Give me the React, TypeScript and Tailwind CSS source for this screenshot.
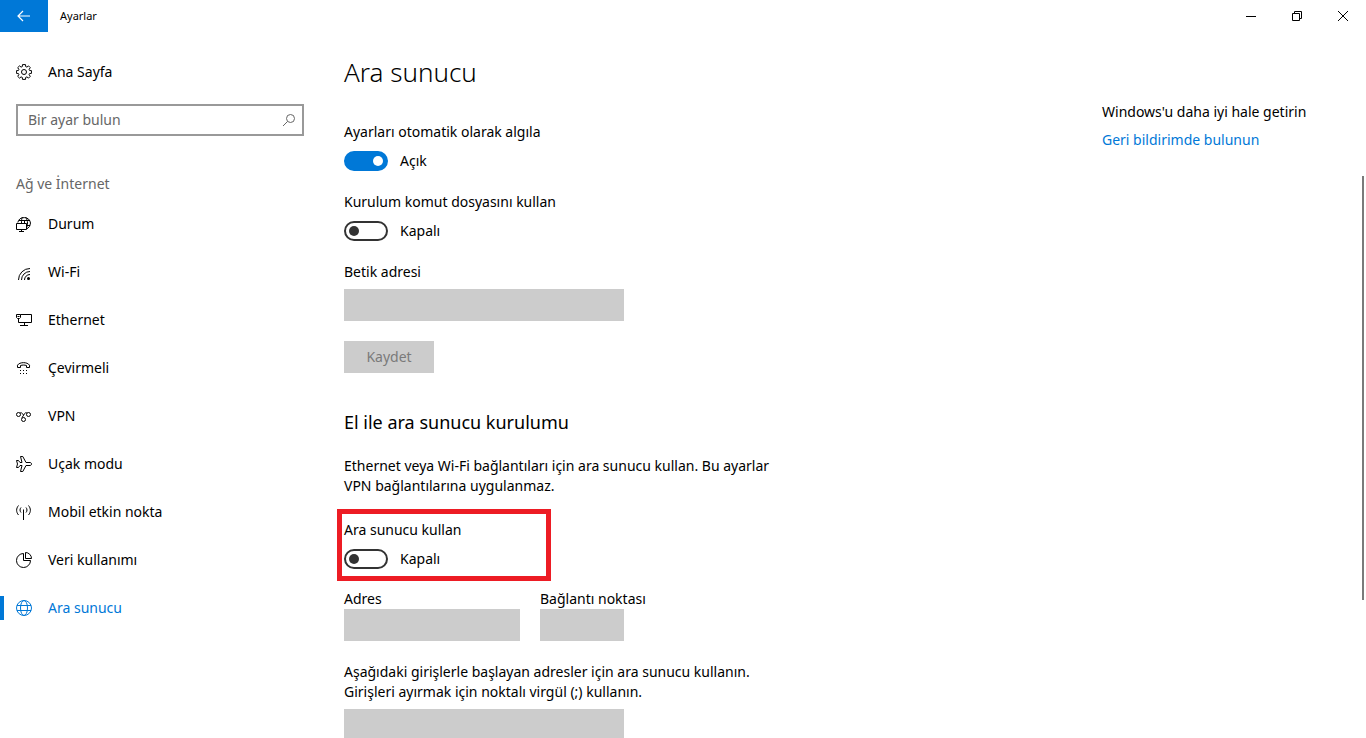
import { useState } from "react";
import type { ReactNode } from "react";

const Icon = ({ children }: { children: ReactNode }) => (
    <svg
        viewBox="0 0 16 16"
        className="h-4 w-4 shrink-0"
        fill="none"
        stroke="currentColor"
        strokeWidth="1"
        aria-hidden="true"
    >
        {children}
    </svg>
);

const GearIcon = () => (
    <Icon>
        <path d="M6.500 .6h3l.2 2 1.200.5 1.600-1.200 1.800 1.800-1.200 1.600.5 1.200 2 .2v2.600l-2 .2-.5 1.200 1.200 1.600-1.800 1.800-1.600-1.200-1.200.5-.2 2h-3l-.2-2-1.200-.5-1.600 1.200-1.800-1.800 1.200-1.600-.5-1.200-2-.2V6.700l2-.2.5-1.200-1.200-1.600 1.800-1.800 1.600 1.200 1.200-.5z" />
        <circle cx="8" cy="8" r="2.500" />
    </Icon>
);

const StatusIcon = () => (
    <Icon>
        <path d="M1.800 6.500A6.500 6.500 0 0 1 14.500 7a6.500 6.500 0 0 1-3.500 5.800M6.500 1C5.500 2.500 5.500 4.500 5.500 7M9.500 1c1.500 2 2 4 2 6 0 2-.3 3-.8 4.500M8.500 4.500V7M3 4.500h11M11 9.500h3" />
        <path d="M.5 7.500h10v6H.5zM5.500 13.500v2M3 15.500h5" />
    </Icon>
);

const WifiIcon = () => (
    <Icon>
        <path d="M2.500 16A11.500 11.500 0 0 1 14 4.500M5.500 16A8.500 8.500 0 0 1 14 7.500M8.500 16A5.500 5.500 0 0 1 14 10.500" />
        <circle cx="12.500" cy="14.500" r="1.500" fill="currentColor" stroke="none" />
    </Icon>
);

const EthernetIcon = () => (
    <Icon>
        <path d="M4.500 2.500h11v8H2.500V7M8.500 10.500v3M4 13.500h8" />
        <path d="M.5 2.500h4v3l-1 1h-2l-1-1zM1.500 4.500h2" />
    </Icon>
);

const DialUpIcon = () => (
    <Icon>
        <path d="M1.500 7.500V5.200C3.500 1.800 11.500 1.800 13.500 5.200v2.300h-3V5.500c-2-.6-4-.6-6 0v2z" />
        <path d="M4 10.500h1M7 10.500h1M10 10.500h1M4 13.500h1M7 13.500h1M10 13.500h1" />
    </Icon>
);

const VpnIcon = () => (
    <Icon>
        <circle cx="2.500" cy="6.500" r="2" />
        <circle cx="12.500" cy="6.500" r="2" />
        <circle cx="7.500" cy="11.500" r="2" />
        <path d="M4 5.200c1-.9 1.500-.7 2.300.3L7.500 7M11 5.200c-1-.9-1.500-.7-2.300.3L5.900 9.800" />
    </Icon>
);

const PlaneIcon = () => (
    <Icon>
        <path d="M4.500 .5h2.300L10 6.500h4c2 0 2 3 0 3h-4L6.800 15.500H4.500L6 9.500H4L2.500 11.500H.5L1.500 8 .5 4.500h2l1.500 2h2z" />
    </Icon>
);

const HotspotIcon = () => (
    <Icon>
        <path d="M7.500 5.500V16M5 3.500c-1.300 1.500-1.300 3.500 0 5M10 3.500c1.300 1.500 1.300 3.500 0 5M2.500 1.500c-2.500 3-2.500 6.500 0 9.500M12.500 1.500c2.500 3 2.500 6.500 0 9.500" />
    </Icon>
);

const UsageIcon = () => (
    <Icon>
        <path d="M7.500 1.500A7 7 0 1 0 14.500 8.500h-7z" />
        <path d="M9.500 .5v6h6a6 6 0 0 0-6-6z" />
    </Icon>
);

const GlobeIcon = () => (
    <Icon>
        <circle cx="8" cy="8" r="7.500" />
        <ellipse cx="8" cy="8" rx="3.500" ry="7.500" />
        <path d="M1 5.500h14M1 10.500h14" />
    </Icon>
);

const navItems = [
    { label: "Durum", icon: <StatusIcon /> },
    { label: "Wi-Fi", icon: <WifiIcon /> },
    { label: "Ethernet", icon: <EthernetIcon /> },
    { label: "Çevirmeli", icon: <DialUpIcon /> },
    { label: "VPN", icon: <VpnIcon /> },
    { label: "Uçak modu", icon: <PlaneIcon /> },
    { label: "Mobil etkin nokta", icon: <HotspotIcon /> },
    { label: "Veri kullanımı", icon: <UsageIcon /> },
    { label: "Ara sunucu", icon: <GlobeIcon />, active: true },
];

function TitleBar() {
    return (
        <header className="flex h-8 shrink-0 items-center">
            <button type="button" aria-label="Geri" className="flex h-8 w-12 items-center justify-center bg-[#0078d7] text-white">
                <svg viewBox="0 0 14 12" className="h-3 w-[14px]" fill="none" stroke="currentColor" strokeWidth="1.200">
                    <path d="M13 6H1M6 1L1 6l5 5" />
                </svg>
            </button>
            <span className="flex-1 pl-3 text-[11px]">Ayarlar</span>
            <button type="button" aria-label="Simge durumuna küçült" className="flex h-8 w-[46px] items-center justify-center">
                <svg viewBox="0 0 10 10" className="h-[10px] w-[10px]" stroke="currentColor">
                    <path d="M0 5.500h10" />
                </svg>
            </button>
            <button type="button" aria-label="Önceki boyut" className="flex h-8 w-[46px] items-center justify-center">
                <svg viewBox="0 0 10 10" className="h-[10px] w-[10px]" fill="none" stroke="currentColor">
                    <path d="M.5 2.500h7v7h-7zM2.500 2.500v-2h7v7h-2" />
                </svg>
            </button>
            <button type="button" aria-label="Kapat" className="flex h-8 w-[46px] items-center justify-center">
                <svg viewBox="0 0 10 10" className="h-[10px] w-[10px]" stroke="currentColor">
                    <path d="M0 0l10 10M10 0L0 10" />
                </svg>
            </button>
        </header>
    );
}

function Sidebar() {
    return (
        <aside className="w-80 shrink-0 pt-5">
            <a href="#home" className="flex h-10 items-center gap-4 px-4">
                <GearIcon />
                Ana Sayfa
            </a>
            <div className="mx-4 mt-3 flex h-8 items-center border-2 border-[#999999] pr-1.5 pl-2.5 text-[#666666]">
                <input
                    type="text"
                    aria-label="Bir ayar bulun"
                    placeholder="Bir ayar bulun"
                    className="min-w-0 flex-1 outline-none placeholder:text-[#666666]"
                />
                <svg viewBox="0 0 14 14" className="h-[14px] w-[14px]" fill="none" stroke="currentColor" aria-hidden="true">
                    <circle cx="8.500" cy="5.500" r="4" />
                    <path d="M5.500 8.500L1 13" />
                </svg>
            </div>
            <h2 className="mt-9 px-4 pb-1 leading-6 text-[#666666]">Ağ ve İnternet</h2>
            <nav>
                {navItems.map((item) => (
                    <a
                        key={item.label}
                        href="#"
                        className={
                            item.active
                                ? "flex h-12 items-center text-[#0078d7]"
                                : "flex h-12 items-center"
                        }
                    >
                        <span className={item.active ? "h-6 w-1 bg-[#0078d7]" : "h-6 w-1"} />
                        <span className="flex items-center gap-4 pl-3">
                            {item.icon}
                            {item.label}
                        </span>
                    </a>
                ))}
            </nav>
        </aside>
    );
}

function Toggle({ label, initial = false }: { label: string; initial?: boolean }) {
    const [on, setOn] = useState(initial);

    return (
        <div>
            <p>{label}</p>
            <label className="mt-[9px] flex h-5 items-center gap-3">
                <input
                    type="checkbox"
                    role="switch"
                    aria-label={label}
                    checked={on}
                    onChange={() => setOn(!on)}
                    className="flex h-5 w-11 appearance-none items-center rounded-full border-2 border-[#333333] px-[3px] before:h-[10px] before:w-[10px] before:rounded-full before:bg-[#333333] checked:justify-end checked:border-[#0078d7] checked:bg-[#0078d7] checked:before:bg-white"
                />
                {on ? "Açık" : "Kapalı"}
            </label>
        </div>
    );
}

function ProxySettings() {
    return (
        <main className="min-w-0 flex-1 pt-5 pl-6">
            <h1 className="text-[26px] leading-10 font-light">Ara sunucu</h1>
            <div className="mt-[30px] flex flex-col gap-[21px]">
                <Toggle label="Ayarları otomatik olarak algıla" initial />
                <Toggle label="Kurulum komut dosyasını kullan" />
            </div>
            <label htmlFor="script" className="mt-[21px] block">Betik adresi</label>
            <input id="script" type="text" disabled className="mt-[7px] block h-8 w-70 bg-[#cccccc] px-2" />
            <button type="button" disabled className="mt-5 block h-8 w-[90px] bg-[#cccccc] text-[#7a7a7a]">
                Kaydet
            </button>

            <h2 className="mt-[35px] text-lg leading-7">El ile ara sunucu kurulumu</h2>
            <p className="mt-5 max-w-110">
                Ethernet veya Wi-Fi bağlantıları için ara sunucu kullan. Bu ayarlar VPN bağlantılarına uygulanmaz.
            </p>
            <div className="mt-[13px] -ml-[7px] w-[214px] border-[5px] border-[#ed1c24] pt-1.5 pb-[7px] pl-0.5">
                <Toggle label="Ara sunucu kullan" />
            </div>
            <div className="mt-2 flex gap-5">
                <div className="w-44">
                    <label htmlFor="address" className="block">Adres</label>
                    <input id="address" type="text" disabled className="block h-8 w-full bg-[#cccccc] px-2" />
                </div>
                <div className="w-21">
                    <label htmlFor="port" className="block whitespace-nowrap">Bağlantı noktası</label>
                    <input id="port" type="text" disabled className="block h-8 w-full bg-[#cccccc] px-2" />
                </div>
            </div>
            <label htmlFor="exceptions" className="mt-[21px] block max-w-110">
                Aşağıdaki girişlerle başlayan adresler için ara sunucu kullanın. Girişleri ayırmak için noktalı virgül (;) kullanın.
            </label>
            <input id="exceptions" type="text" disabled className="mt-[7px] block h-8 w-70 bg-[#cccccc] px-2" />
        </main>
    );
}

export default function App() {
    return (
        <div className="relative flex h-screen flex-col overflow-hidden bg-white font-['Noto_Sans','Open_Sans',sans-serif] text-sm leading-5 text-black">
            <TitleBar />
            <div className="flex min-h-0 flex-1 overflow-y-auto [scrollbar-width:none]">
                <Sidebar />
                <ProxySettings />
                <aside className="w-66 shrink-0 pt-[70px]">
                    <p>Windows'u daha iyi hale getirin</p>
                    <a href="#feedback" className="mt-2 block text-[#0078d7]">Geri bildirimde bulunun</a>
                </aside>
            </div>
            <div className="absolute top-44 right-0.5 h-106 w-0.5 bg-[#7a7a7a]" />
        </div>
    );
}
